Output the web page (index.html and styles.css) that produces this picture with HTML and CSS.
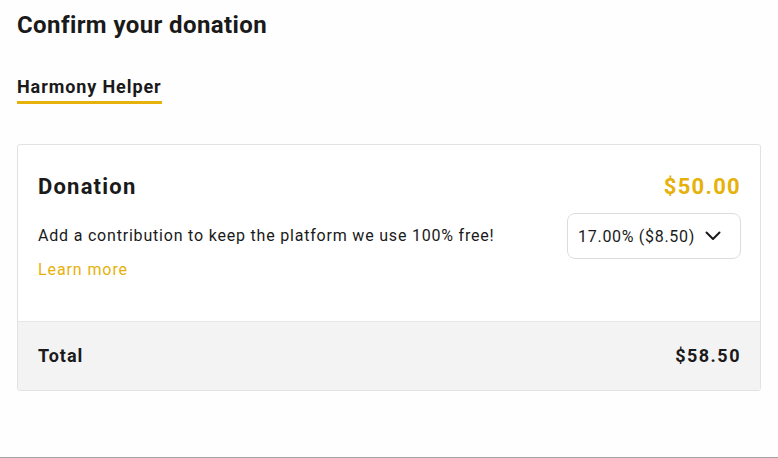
FILE: index.html
```html
<!DOCTYPE html>
<html lang="en">
  <head>
    <meta charset="UTF-8" />
    <meta name="viewport" content="width=device-width, initial-scale=1.0" />
    <title>Confirm your donation</title>
    <link rel="stylesheet" href="styles.css">
  </head>
  <body>
    <h1 class="title">Confirm your donation</h1>
    <div class="tabs">
      <span class="tab tab-active">Harmony Helper</span>
    </div>

    <div class="card">
      <div class="card-body">
        <div class="row">
          <h2 class="label">Donation</h2>
          <span class="amount">$50.00</span>
        </div>
        <div class="tip">
          <div class="tip-text">
            <p class="desc">Add a contribution to keep the platform we use 100% free!</p>
            <a class="learn" href="#">Learn more</a>
          </div>
          <div class="select">
            <span>17.00% ($8.50)</span>
            <svg width="16" height="10" viewBox="0 0 16 10" fill="none">
              <path d="M1.5 1.5 L8 8 L14.5 1.5" stroke="#1a1a1a" stroke-width="2" stroke-linecap="round" stroke-linejoin="round"/>
            </svg>
          </div>
        </div>
      </div>
      <div class="card-total">
        <span class="total-label">Total</span>
        <span class="total-value">$58.50</span>
      </div>
    </div>

    <div class="bottom-edge"></div>
  </body>
</html>
```

FILE: styles.css
```css
body {
  margin: 0;
  padding: 9px 17px 0;
  font-family: Roboto, "Liberation Sans", sans-serif;
  color: #1a1a1a;
  background: #fefefe;
}
.title {
  margin: 0;
  font-size: 24px;
  line-height: 32px;
  font-weight: 700;
  letter-spacing: 0.4px;
}
.tabs {
  display: flex;
  margin-top: 34px;
}
.tab {
  font-size: 18px;
  line-height: 24px;
  font-weight: 700;
  letter-spacing: 0.9px;
  padding-bottom: 2px;
}
.tab-active {
  border-bottom: 3px solid #e6b10a;
}
.card {
  margin-top: 40px;
  border: 1px solid #e2e2e2;
  border-radius: 3px;
  background: #fff;
  overflow: hidden;
}
.card-body {
  padding: 28px 20px 39px;
}
.row {
  display: flex;
  justify-content: space-between;
  align-items: center;
  height: 28px;
}
.label {
  margin: 0;
  font-size: 22px;
  line-height: 28px;
  font-weight: 700;
  letter-spacing: 1.2px;
}
.amount {
  font-size: 22px;
  line-height: 28px;
  font-weight: 700;
  letter-spacing: 1.3px;
  margin-right: -1px;
  color: #e6b10a;
}
.tip {
  display: flex;
  justify-content: space-between;
  align-items: flex-start;
  margin-top: 12px;
}
.tip-text {
  padding-top: 11px;
}
.desc {
  margin: 0;
  font-size: 16px;
  line-height: 24px;
  letter-spacing: 0.8px;
}
.learn {
  display: block;
  margin-top: 10px;
  font-size: 16px;
  line-height: 24px;
  letter-spacing: 0.9px;
  color: #e6b10a;
  text-decoration: none;
}
.select {
  display: flex;
  align-items: center;
  gap: 10px;
  height: 44px;
  padding: 0 19px 0 10px;
  margin-right: -1px;
  border: 1px solid #dcdcdc;
  border-radius: 8px;
  font-size: 16px;
  letter-spacing: 0.7px;
}
.card-total {
  display: flex;
  justify-content: space-between;
  padding: 22px 20px 22px;
  border-top: 1px solid #e6e6e6;
  background: #f3f3f3;
  font-size: 18px;
  line-height: 24px;
  font-weight: 700;
}
.total-label {
  letter-spacing: 1px;
}
.total-value {
  letter-spacing: 1.5px;
  margin-right: -1px;
}
.bottom-edge {
  margin: 66px -17px 0;
  border-top: 1px solid #a3a3a3;
}
```
